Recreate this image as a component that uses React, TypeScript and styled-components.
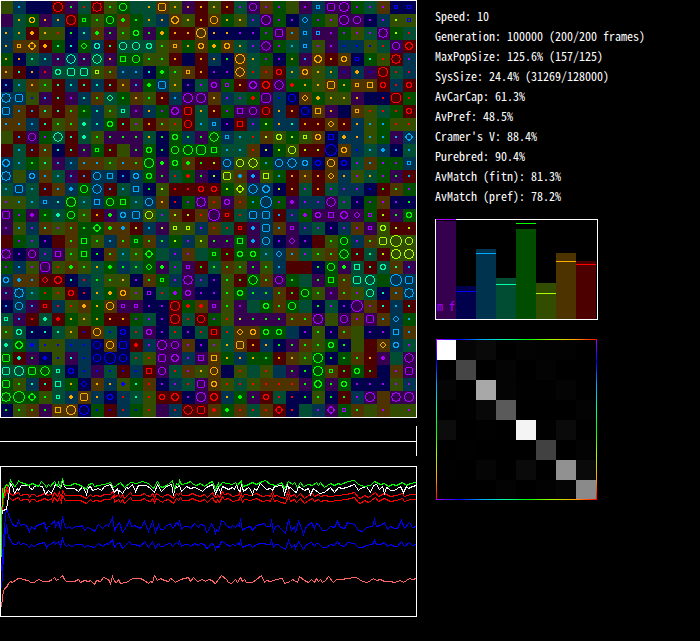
import React from "react";
import styled, { createGlobalStyle } from "styled-components";

const GlobalStyle = createGlobalStyle`
  body {
    margin: 0;
    background: #000;
    color: #fff;
    font-family: "Noto Sans Mono CJK SC", "DejaVu Sans Mono", monospace;
    font-size: 12px;
  }
`;

type Hue = "p" | "n" | "b" | "t" | "g" | "o" | "w" | "r";

const HUES: Hue[] = ["p", "n", "b", "t", "g", "o", "w", "r"];

const BRIGHT: Record<Hue, string> = {
  p: "#aa00ff",
  n: "#0000ff",
  b: "#00aaff",
  t: "#00ffaa",
  g: "#00ff00",
  o: "#aaff00",
  w: "#ffaa00",
  r: "#ff0000",
};

const DARK: Record<Hue, string> = {
  p: "#35004d",
  n: "#00004d",
  b: "#00334d",
  t: "#004d33",
  g: "#004d00",
  o: "#334d00",
  w: "#4d3300",
  r: "#4d0000",
};

/* One token per cell: habitat hue, organism hue, organism shape. */
const WORLD = `
o-- bb. n-- n-- rrO pg. tr. rrX og. ggC t-- tw. wwQ ow. pw. rw.
p-- tw. gwc pw. bw. rrO ggs og. ggC wg* gg. tw. bw. wwx ow. rw.
bw. tw. rw* ow. or. ng. bt. wg* pg. og. ggc pg. gw* rw. rw. wwO
bw. wws wwz rw* gt. nt. ggd btc rt. ttC ttC ttc og. wws gw. wwc
gw. nw. tt. bt. pt. btD pt. ttD pw. ggS ggC og. og. rw. n-- rw.
ww. rt. nw. pr. ttc ttQ ttQ oos wg. bb. bb. nt. gg* og. wws rw.
nb. tb. ww. og. rt. bt. rt. bt. rt. ww. pb. gg* bbQ ow. np. tp.
bbX bbQ on. pb. rt. pp. bt. wg. ttd gg. ww. og. rw. bb. ppO ppO
bbQ wb. rb. wt. rt. wg. gg. bt. og. tts pp. bw. gp. ppx rrQ tw.
wb. wb. bb. rt. og. wg. tt* bt. ggc rt. op. rw. wg. or. rrC tb.
o-- rb. ppC gp. ttD rt. tt* og. pg. pg. pg. tw. ng. ggc bg. pg.
r-- tb. rb. wt. nt. rt. pg. ggs rg. o-- pg. ggc ng. ggC ggO ggR
bbx tb. gg. ot. pb. bb. wb. wb. og. wb. wg. ggO pg* ggc wg* rg.
bbX o-- bbc wb. tb. pb. rb. bbC bbS nb. bbc ggc pg. tr. gr* pg.
tb. bbQ tb. rb. wb. bb* ggC bbD rb. tb. bbS ng. oo. rr. rr. rrc
op. ob. tb. bbs bt. ggO tb. bbS ggC ggS tb. bbC ww. nr. gp. ppX
ppQ gp. pp* gg. tt* ggC og. rw. pg* bbc bbQ ooC tp. wo. ro. wr.
pp. ob. bp. wt. op. wg. gg. ggz wg* wb* ro. bb. po. oos oos bp.
r-- gp. tp. np. r-- wg. ggS og. bb. wg. ggs wg. bg. go. bp. oo.
ppX np. ppC bp. ppS og. ggS ng. wg. tb. og. ggz t-- bp. wp. t--
gp. bb. op. ppR or. wg* og. tw. gg* bg. tg. ggd pg* tp. pps rg.
bbc wb* wb. rrd rrx nt. br. tg. og. ow. np. wg. ggs bp. ppX bp.
pb. bbX tb. gr. or. rrc nr. tw. gw* wwc op. nps tr. gp* ppc np.
nb. bbC pb. rrs br. or. ww* gw. wwC pps pps np. np. rrO gr* wr*
tts pb. rr. tt* rr* gw. ow. gw. rw. rw. gp. tp. np. rrO tr. rrC
og. ttc nt. nt. tt. ow. rn. wwC tn. nnc tr. ppc np. tr. np. tr.
tt* ggx bn* on. on. bn. bn. nnC wwC nnQ rr* bp. ppO ppC wp. np.
ggQ rt* pg. nn* on. pt. bn. nnC nnB nnC tr. or. ppQ ppx bp. ppS
ttQ ttO ggQ ggD tts nnc bn. pn. tn. rn. bn. rrS ppC tr. wp. ow.
ggQ og. bt. rt. ttS gw. nnd ww. bw. on* gt. wr. np. bp. tr. ppQ
ggX ggB ggz og. tts bw* wwQ bw. nnc br. tt. or. rrc rrx np. ppO
ng. og. wg. pg. wwS wwO nnO gn. rn. br. gn. or. p-- br. rrD rrQ
`;

const WORLD_EAST = `
ow. rw. tp. ppC wp. gp. o-- pp. bbs ppQ ppO gp. tp. wp. nns nns
wwC gw. ow. bp. ppO gp. np. bbd gp. op. ppO ppC np. bp. oo. ons
nw. nw. np. np. gp. ppQ wb. bbs pbs pp. gp. op. tp. ppX go. tr.
gw* wwc tw. bp. ppD gp. tb. bbs op. pp. bn. bn. on. tr. ppC rrx
bw. ng. wwO tw. gp. np. gw. pb. wwx rw. wwc nns gt. or. rrX bp.
np. np. wwD tr. wr. rrc tw. wwc ow. tw. pn. bw* pn. rrO tr. br.
ppc gps rw. ppx rrx ppD gr* gw. ow. wwQ gw. wws wwS rrc br. rrc
ww. bp. tp. gr* ppR bn. nnC wwd gw* ow. ow. pw. n-- nr. rrR gr.
rw. gp. ppS ppC rrC bw. rw. nnC wwS pw. n-- wws or. tr. gr. rrc
bbs np. rrS bp. go. bw. bt. rw. rw. wwd rw. bw. ob. gb. or. or.
ggD bbs tb. tr. wo. ooc go. oos wwc nnS bw* bw. ob. gb. pb. bbz
ggS tb. tb. wr. no. go. ooC ro. ro. nnB wwc bn. tb. bb* nb. tb.
ro. bbC ooC ooD gb. bbC bbD bbc nnc wwC nnc tp. wb. gp. gp. bbs
no. ooQ wb* pb* ooS gb. rw. ww. rw. wwd bw. op. tw. gp. pg. rb.
rrc go. ooz bbD bbx no. rw. tp. rw. tp. bp. bp. nn. rg. wg. gp.
wr. ppc wr. gb. bbB gp. pp* bp. bp. ppD tp. np. gp. wp. np. ng.
ppB rrs tr. bbQ bbQ rb. bp. gp* ppc ppS ppx ppd gps ro. pg. ggc
wr. tr. rrs pb* bbQ wb. pps bp. tp. np. bp. wp. pps ooc ro. ro.
pg. pg. ggS pb* bbC np. ppd np. r-- og. ggC bp. wg. ooQ ooB ooC
ggs rg. ggc ggc tb. bbd wb. tp. og. wg. ggD rt. tt. ro. ooO ooO
tg. wg. og. pg. og. bb. r-- r-- ng. ggC pg* ttS rt. ttc wt. pb.
np. og. rg. ggD wg. ppC gg. t-- pg. ggS wg. ttQ ttO g-- bbB bbQ
np. og. ggc bg. bg. wg. rg. ggC og. pp. wg. op. ttC nt. wb. bbX
pps og. pp. t-- ggc wg. ggC t-- ng. tp. np. ppB wp. rt. bb. rt.
gp. or. po. pg. pg. pg. wg. wg. ppO o-- ppC wp. ppQ wb. bbd gb.
rrS tr. wwd wwc ggc ggc b-- np. og. np. wg. o-- np. np. bbS wb.
op. tw. wwQ rw. bw. ng. pg. wg. og. ggc ng. o-- r-- wwd bbc tp.
wwS gw. bw. gw. gg. rw. ww. og. ggO ng. gg. wg. rw. pp* t-- ppD
wwC n-- or. t-- or. b-- pg. ng. ggO wgs rg. ggc rg. n-- wp. ppQ
wwc or. tr. or. wr. wr. wr. pg. ggx pg. ggc np. np. np. op. bp.
rrx bw. gg* pg. rrc tr. nr. ng. og. ng. rg. bp. ppO w-- ppX ppO
wr* gg* wr. tr. wr. rrz nr. t-- bp. ppz gps wg. o-- wp. o-- op.
`;

/* Outlines on the pixel grid, listed for one quadrant and mirrored to four. */
const SHAPES: Record<string, string> = {
  "-": "",
  ".": "00",
  "*": "00 10 01",
  s: "10 11 01",
  S: "20 21 22 12 02",
  d: "20 11 02",
  c: "20 21 12 02 11",
  z: "20 30 21 12 03 02",
  C: "30 31 22 13 03",
  Q: "30 31 32 23 13 03",
  D: "40 31 32 23 13 04",
  x: "30 31 21 22 12 13 03",
  O: "40 41 32 33 23 14 04",
  R: "40 41 42 33 24 14 04",
  X: "40 31 32 33 23 13 04",
  B: "50 51 42 43 34 24 15 05",
};

const pathOf = (quadrant: string) =>
  quadrant
    .split(" ")
    .filter(Boolean)
    .flatMap((pair) => {
      const x = Number(pair[0]);
      const y = Number(pair[1]);
      return [
        [6 + x, 6 + y],
        [5 - x, 6 + y],
        [6 + x, 5 - y],
        [5 - x, 5 - y],
      ];
    })
    .map(([x, y]) => `M${x} ${y}h1v1h-1z`)
    .join("");

const SHAPE_PATHS = Object.fromEntries(
  Object.entries(SHAPES).map(([key, quadrant]) => [key, pathOf(quadrant)])
);

const rowsOf = (text: string) =>
  text.trim().split("\n").map((line) => line.trim().split(/\s+/));

const WEST_ROWS = rowsOf(WORLD);
const EAST_ROWS = rowsOf(WORLD_EAST);
const CELLS = WEST_ROWS.map((row, i) => [...row, ...EAST_ROWS[i]]);

const GREEN =
  "1,90 1,60 2,22 3,31 4,22 6,18 8,20 10,14 11,16 14,20 16,19 18,14 20,16 24,17 28,19 32,17 34,18 38,20 41,15 44,18 46,21 48,18 50,20 54,15 57,20 58,16 60,21 62,12 64,19 70,19 74,17 78,18 82,20 86,23 88,18 92,17 94,20 98,19 104,18 110,16 113,21 116,19 120,16 124,21 130,16 136,17 142,15 148,17 153,22 157,15 160,20 162,21 168,18 172,14 174,23 176,17 178,19 179,14 181,18 186,17 190,15 193,18 196,19 200,17 204,20 208,17 212,15 215,23 218,17 219,20 222,16 232,18 235,16 237,19 241,14 242,20 246,19 252,16 256,18 262,15 265,14 270,18 276,19 281,16 284,22 288,15 292,18 294,16 297,21 300,16 303,20 308,18 312,19 316,16 318,19 320,16 324,21 330,17 334,19 338,17 340,18 348,15 354,14 358,18 364,20 370,19 374,15 380,18 384,17 388,20 392,18 396,19 402,16 406,19 410,17 416,16";
const WHITE =
  "1,52 2,44 6,43 8,30 10,17 12,20 14,27 17,22 18,24 21,19 28,19 30,22 32,23 34,20 36,19 42,20 45,28 48,24 51,27 55,18 58,20 60,22 62,15 64,20 66,22 74,22 78,25 82,20 84,23 86,28 88,21 90,20 92,24 98,22 101,24 104,20 110,18 114,26 117,22 118,26 119,24 122,27 126,21 128,22 132,18 135,25 138,19 146,19 150,22 154,26 157,18 161,25 165,21 168,19 171,18 173,29 175,20 177,21 179,19 181,25 186,20 190,22 194,21 199,23 202,25 206,21 208,20 212,18 215,27 217,23 218,21 220,26 222,20 228,23 232,21 234,23 236,18 238,24 240,25 241,17 243,25 248,21 250,23 252,28 254,22 256,24 260,17 262,19 266,23 270,22 272,24 274,20 282,19 284,28 287,18 288,22 290,21 294,25 296,26 298,20 300,21 304,24 308,22 310,28 313,22 319,27 324,26 330,21 334,26 338,21 342,22 346,21 354,18 358,24 360,22 366,20 370,26 373,19 376,18 379,23 382,20 384,27 386,21 388,22 390,24 394,24 400,20 403,26 406,20 408,22 412,20 416,19";
const RED_TAIL =
  "12,30 18,27 20,30 24,29 28,29 29,32 31,29 34,29 36,31 40,30 44,28 48,30 51,28 52,31 54,27 57,31 59,27 61,32 62,25 65,30 72,30 80,30 86,33 90,29 92,31 96,30 100,31 104,29 110,29 113,25 114,32 118,29 120,32 122,29 124,33 130,27 132,30 140,30 144,28 146,30 150,31 152,28 154,32 156,28 162,32 164,30 168,29 173,33 176,28 178,30 180,27 182,30 188,30 192,28 196,30 200,31 204,29 207,32 212,27 214,31 216,32 217,29 219,32 222,26 224,29 228,28 232,31 238,30 240,26 242,32 244,29 250,30 256,28 262,31 268,30 270,31 272,26 274,31 276,30 281,32 285,33 288,25 290,31 294,29 296,32 300,28 304,33 308,30 312,28 314,31 318,29 320,31 324,30 330,31 338,30 346,29 350,28 354,27 358,32 360,33 364,30 368,32 371,30 375,27 378,31 384,28 390,31 396,30 402,28 404,31 410,29 416,29";
const BLUE =
  "1,105 2,90 4,60 6,41 8,48 10,53 12,58 14,59 16,60 18,54 20,59 23,58 26,59 27,61 29,65 31,60 33,62 34,63 36,59 40,58 44,56 46,64 47,61 50,59 54,54 55,60 56,58 58,55 60,63 62,50 64,59 66,62 68,60 71,62 76,60 80,60 82,59 84,64 87,61 90,62 94,65 98,58 102,62 106,58 108,60 112,51 114,64 116,60 119,56 122,66 126,60 129,54 131,60 134,59 138,61 140,62 144,55 146,60 148,65 152,55 155,66 158,58 160,63 163,63 165,60 170,57 172,62 174,60 176,56 178,59 179,54 181,63 184,60 188,60 190,62 194,57 198,61 200,58 204,59 206,66 208,64 211,57 213,60 215,67 216,63 218,65 221,54 224,56 226,59 230,62 232,59 235,61 237,58 239,60 240,52 242,64 246,61 250,60 252,64 256,59 260,58 264,57 266,60 270,60 271,53 273,65 275,60 278,59 280,62 285,67 288,53 291,64 294,60 295,66 298,55 300,59 303,68 305,62 306,60 311,56 314,62 316,57 318,58 322,64 326,64 330,60 334,61 337,55 340,61 344,62 347,56 354,58 358,64 362,65 366,61 372,60 374,53 376,60 380,59 384,56 387,63 390,60 394,62 397,62 401,54 404,62 409,56 412,61 416,60";
const PINK =
  "1,141 2,130 3,125 4,122 6,121 8,117 10,115 12,116 16,113 18,112 24,113 26,114 28,114 30,116 34,116 36,114 39,113 42,115 48,115 52,113 54,111 56,114 59,112 62,109 64,113 66,115 74,115 78,113 80,116 84,114 88,115 90,114 94,118 96,114 100,115 103,111 108,113 110,117 112,110 114,115 116,116 118,113 120,117 126,116 129,114 132,112 140,112 144,114 148,117 150,115 152,116 154,109 157,114 160,112 164,114 168,115 170,112 172,113 175,116 180,113 184,112 188,111 190,115 193,111 197,115 202,113 205,115 208,113 212,114 213,116 215,117 218,113 221,109 226,113 228,116 231,117 235,113 237,116 240,111 242,115 244,113 246,116 252,116 256,113 261,109 264,116 266,114 270,115 276,113 282,112 284,117 290,115 292,113 294,114 297,116 299,110 304,114 308,116 311,113 314,116 316,112 318,115 320,113 322,116 325,114 328,110 333,116 336,113 342,113 346,112 356,111 362,115 367,116 373,112 376,114 380,113 384,115 390,115 394,116 400,114 403,116 406,114 409,112 412,113 416,112";

const remap = (points: string, change: (y: number) => number) =>
  points
    .split(" ")
    .map((point) => {
      const [x, y] = point.split(",").map(Number);
      return `${x},${Math.round(change(y))}`;
    })
    .join(" ");

const BLUE_TAIL = BLUE.split(" ").slice(5).join(" ");

const SERIES = [
  { color: "#ff6464", points: PINK },
  { color: "#0000ff", points: `1,122 2,107 3,90 4,72 6,58 8,70 ${remap(BLUE_TAIL, (y) => 79 + (y - 61) * 0.6)}` },
  { color: "#0000ff", points: BLUE },
  { color: "#ff0000", points: `1,50 4,28 6,21 8,30 ${remap(RED_TAIL, (y) => y + 4)}` },
  { color: "#ff0000", points: `1,45 3,22 5,28 7,18 8,26 ${remap(RED_TAIL, (y) => y - 1)}` },
  { color: "#ffffff", points: WHITE },
  { color: "#00ff00", points: GREEN },
];

const STATS = [
  "Speed: 10",
  "Generation: 100000 (200/200 frames)",
  "MaxPopSize: 125.6% (157/125)",
  "SysSize: 24.4% (31269/128000)",
  "AvCarCap: 61.3%",
  "AvPref: 48.5%",
  "Cramer's V: 88.4%",
  "Purebred: 90.4%",
  "AvMatch (fitn): 81.3%",
  "AvMatch (pref): 78.2%",
];

const BARS: { hue: Hue; level: number; mark: number; label?: string }[] = [
  { hue: "p", level: 98, mark: 99, label: "m f" },
  { hue: "n", level: 33, mark: 27 },
  { hue: "b", level: 70, mark: 65 },
  { hue: "t", level: 41, mark: 34 },
  { hue: "g", level: 90, mark: 95 },
  { hue: "o", level: 36, mark: 25 },
  { hue: "w", level: 66, mark: 57 },
  { hue: "r", level: 58, mark: 54 },
];

const MATCHES = [
  [255, 5, 9, 0, 3, 2, 2, 0],
  [0, 70, 0, 4, 0, 3, 0, 0],
  [5, 0, 168, 4, 1, 1, 4, 0],
  [0, 1, 8, 90, 0, 0, 0, 3],
  [12, 0, 1, 0, 244, 1, 10, 0],
  [0, 1, 0, 0, 0, 65, 0, 3],
  [1, 0, 5, 0, 10, 0, 145, 10],
  [0, 0, 0, 3, 0, 2, 5, 138],
];

const Page = styled.main`
  display: flex;
  align-items: flex-start;
  gap: 18px;
`;

const Plots = styled.section`
  display: flex;
  flex-direction: column;
  flex: none;
`;

const Drawing = styled.svg`
  display: block;
  shape-rendering: crispEdges;
`;

const Timeline = styled(Drawing)`
  margin: 8px 0 10px;
`;

const Readout = styled.aside`
  display: flex;
  flex-direction: column;
  align-items: flex-start;
  flex: 1;
  padding-top: 6px;
`;

const StatList = styled.ul`
  list-style: none;
  margin: 0 0 13px;
  padding: 0;
`;

const Stat = styled.li`
  line-height: 20px;
  white-space: nowrap;
`;

const BarChart = styled.div`
  display: flex;
  align-items: flex-end;
  box-sizing: border-box;
  width: 163px;
  height: 101px;
  margin-bottom: 19px;
  border: 1px solid #fff;
`;

const BarColumn = styled.div`
  position: relative;
  display: flex;
  align-items: flex-end;
  width: 20px;
  height: 100%;
`;

const Bar = styled.div<{ $hue: Hue; $level: number }>`
  display: flex;
  align-items: flex-end;
  justify-content: center;
  width: 100%;
  height: ${(p) => p.$level}px;
  background: ${(p) => DARK[p.$hue]};
  color: ${(p) => BRIGHT[p.$hue]};
  line-height: 26px;
  white-space: pre;
`;

const BarMark = styled.div<{ $hue: Hue; $level: number }>`
  position: absolute;
  left: 0;
  right: 0;
  bottom: ${(p) => p.$level}px;
  height: 1px;
  background: ${(p) => BRIGHT[p.$hue]};
`;

const spectrum = HUES.map((hue) => BRIGHT[hue]).join(", ");

const Matrix = styled.div`
  display: grid;
  grid-template-columns: repeat(8, 20px);
  grid-auto-rows: 20px;
  margin-left: 1px;
  padding: 1px 1px 0 0;
  background:
    linear-gradient(to right, ${spectrum}) top / 100% 1px no-repeat,
    linear-gradient(to right, ${spectrum}) bottom / 100% 1px no-repeat,
    linear-gradient(to bottom, ${spectrum}) left / 1px 100% no-repeat,
    linear-gradient(to bottom, ${spectrum}) right / 1px 100% no-repeat;
`;

const MatrixCell = styled.div<{ $grey: number; $first: boolean; $last: boolean }>`
  margin-left: ${(p) => (p.$first ? 1 : 0)}px;
  margin-bottom: ${(p) => (p.$last ? 1 : 0)}px;
  background: rgb(${(p) => `${p.$grey}, ${p.$grey}, ${p.$grey}`});
`;

function World() {
  return (
    <Drawing width="417" height="418" viewBox="0 0 417 418" role="img" aria-label="World">
      {CELLS.map((row, y) =>
        row.map((token, x) => (
          <g key={`${x}-${y}`} transform={`translate(${x * 13} ${y * 13 + 1})`}>
            <rect width="13" height="13" fill={DARK[token[0] as Hue]} />
            {token[2] !== "-" && (
              <path d={SHAPE_PATHS[token[2]]} fill={BRIGHT[token[1] as Hue]} />
            )}
          </g>
        ))
      )}
      <path d="M0 0h417v418h-417zM1 1v416h415v-416z" fill="#fff" fillRule="evenodd" />
    </Drawing>
  );
}

function History() {
  return (
    <Drawing width="417" height="151" viewBox="0 0 417 151" role="img" aria-label="History">
      {SERIES.map((series, i) => (
        <polyline
          key={i}
          points={series.points}
          transform="translate(.5 .5)"
          fill="none"
          stroke={series.color}
        />
      ))}
      <path d="M0 0h417v151h-417zM1 1v149h415v-149z" fill="#fff" fillRule="evenodd" />
    </Drawing>
  );
}

export default function App() {
  return (
    <>
      <GlobalStyle />
      <Page>
        <Plots>
          <World />
          <Timeline width="417" height="30" viewBox="0 0 417 30" role="img" aria-label="Timeline">
            <path d="M0 15h417v1h-417zM416 0h1v30h-1z" fill="#fff" />
          </Timeline>
          <History />
        </Plots>
        <Readout>
          <StatList>
            {STATS.map((line) => (
              <Stat key={line}>{line}</Stat>
            ))}
          </StatList>
          <BarChart>
            {BARS.map((bar) => (
              <BarColumn key={bar.hue}>
                <Bar $hue={bar.hue} $level={bar.level}>
                  {bar.label}
                </Bar>
                <BarMark $hue={bar.hue} $level={bar.mark} />
              </BarColumn>
            ))}
          </BarChart>
          <Matrix>
            {MATCHES.flatMap((row, y) =>
              row.map((grey, x) => (
                <MatrixCell key={`${x}-${y}`} $grey={grey} $first={x === 0} $last={y === 7} />
              ))
            )}
          </Matrix>
        </Readout>
      </Page>
    </>
  );
}
